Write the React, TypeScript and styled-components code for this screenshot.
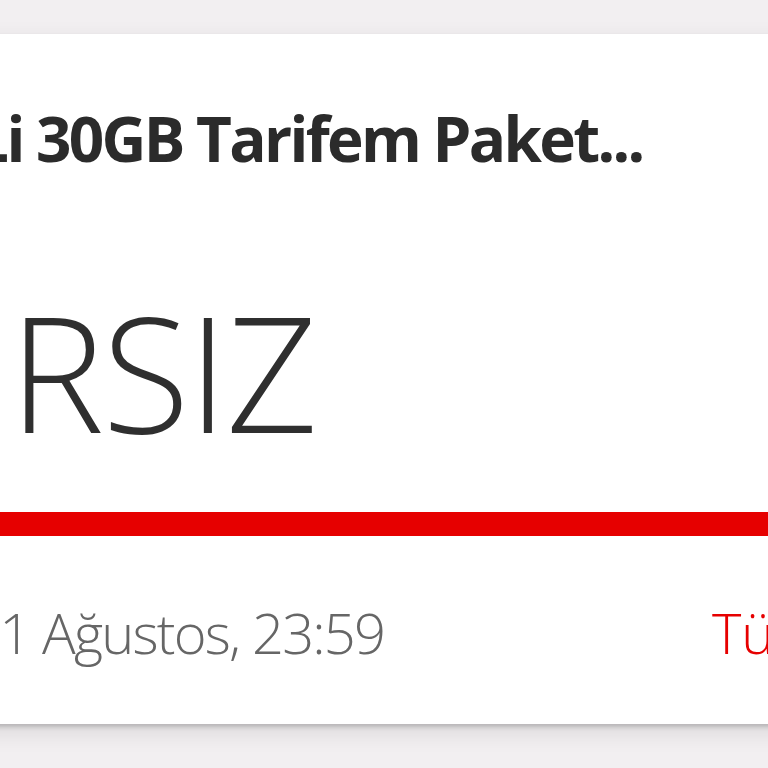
import React from "react";
import styled, { createGlobalStyle } from "styled-components";

const Global = createGlobalStyle`
  html, body { margin: 0; padding: 0; }
  body {
    width: 768px;
    height: 768px;
    overflow: hidden;
    background: #f2eff1;
    font-family: "Open Sans", "Noto Sans", sans-serif;
  }
`;

const Page = styled.div`
  width: 768px;
  height: 768px;
  padding-top: 34px;
  box-sizing: border-box;
  background: #f2eff1;
  overflow: hidden;
`;

const Card = styled.section`
  width: calc(100% + 400px);
  margin-left: -200px;
  height: 690px;
  background: #ffffff;
  box-shadow: 0 3px 4px rgba(0, 0, 0, 0.18), 0 8px 22px rgba(0, 0, 0, 0.1);
  display: flex;
  flex-direction: column;
  padding-left: 200px;
  box-sizing: border-box;
  overflow: hidden;
`;

const Line = styled.div<{ $shift: number }>`
  margin-left: ${(p) => p.$shift}px;
  white-space: nowrap;
`;

const Title = styled(Line)`
  margin-top: 64px;
  font-size: 62px;
  font-weight: 700;
  line-height: 80px;
  letter-spacing: -2.7px;
  color: #2b2b2b;
`;

const Amount = styled(Line)`
  margin-top: 113px;
  font-size: 160px;
  font-weight: 300;
  line-height: 160px;
  letter-spacing: -2px;
  color: #2f2f2f;
`;

const Bar = styled.div`
  margin-top: 61px;
  height: 24px;
  background: #e60000;
  margin-left: -200px;
`;

const Footer = styled.div`
  margin-top: 64px;
  display: grid;
  grid-template-columns: 712px max-content;
  align-items: baseline;
  font-size: 56px;
  font-weight: 300;
  line-height: 64px;
`;

const DateText = styled(Line)`
  color: #666666;
  letter-spacing: -1.8px;
`;

const Link = styled.a`
  color: #e60000;
  text-decoration: none;
  white-space: nowrap;
`;

export default function App() {
  return (
    <>
      <Global />
      <Page>
        <Card>
          <Title $shift={-148}>Red Li 30GB Tarifem Paket...</Title>
          <Amount $shift={-266}>SINIRSIZ</Amount>
          <Bar />
          <Footer>
            <DateText $shift={-31}>31 Ağustos, 23:59</DateText>
            <Link href="#">Tümü</Link>
          </Footer>
        </Card>
      </Page>
    </>
  );
}
